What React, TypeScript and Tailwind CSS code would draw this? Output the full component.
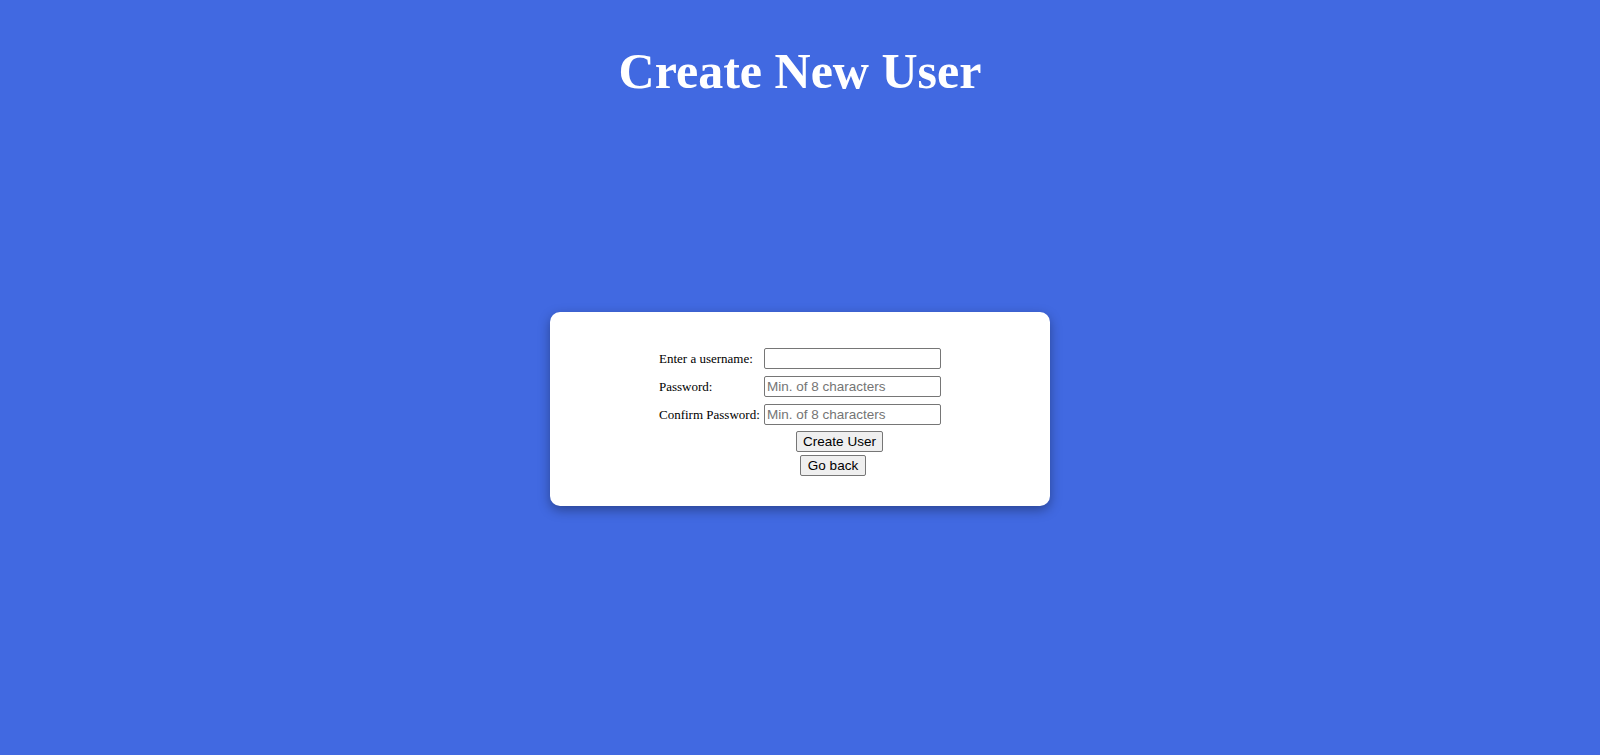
// Create New User — sign-up form on a royal blue page.

const fields = [
  { label: 'Enter a username:', type: 'text', placeholder: '' },
  { label: 'Password:', type: 'password', placeholder: 'Min. of 8 characters' },
  { label: 'Confirm Password:', type: 'password', placeholder: 'Min. of 8 characters' },
];

const inputCls =
  "w-[177px] h-[21px] px-[2px] border border-[#767676] rounded-[2px] bg-white text-[13.5px] text-black placeholder:text-[#757575] font-['Liberation_Sans',Arial,sans-serif] outline-none";

const buttonCls =
  "h-[21px] border border-[#767676] rounded-[2px] bg-[#efefef] text-[13.5px] leading-none text-black font-['Liberation_Sans',Arial,sans-serif]";

export default function App() {
  return (
    <div className="min-h-screen w-full bg-[#4169e1] font-['Liberation_Serif','Times_New_Roman',serif] flex flex-col items-center">
      <h1 className="mt-[46px] text-[50px] leading-[50px] font-bold text-white">Create New User</h1>

      <div className="mt-[216px] w-[500px] h-[194px] rounded-[10px] bg-white shadow-[0_4px_12px_rgba(0,0,0,0.35)] pt-[36px] pl-[109px]">
        <div className="flex flex-col gap-[7px]">
          {fields.map((f) => (
            <div key={f.label} className="flex items-center">
              <label className="w-[105px] text-[13px] text-black whitespace-nowrap">{f.label}</label>
              <input type={f.type} placeholder={f.placeholder} className={inputCls} />
            </div>
          ))}
        </div>
        <div className="flex flex-col items-start pl-[137px] mt-[6px] gap-[3px]">
          <button className={`${buttonCls} w-[87px]`}>Create User</button>
          <button className={`${buttonCls} w-[66px] ml-[4px]`}>Go back</button>
        </div>
      </div>
    </div>
  );
}
